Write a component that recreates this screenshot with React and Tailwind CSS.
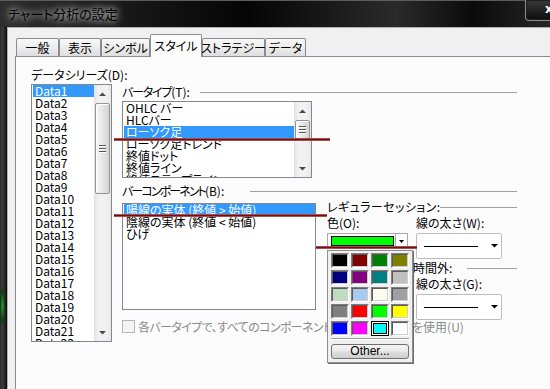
import React from "react";

const FONT = "font-['Noto_Sans_CJK_JP','Noto_Sans',sans-serif] [font-feature-settings:'palt']";

function UpArrow() {
  return (
    <svg width="7" height="4" viewBox="0 0 7 4">
      <path d="M0 4L3.5 0.5L7 4Z" fill="#4a4a4a" />
    </svg>
  );
}

function DownArrow({ color = "#4a4a4a" }) {
  return (
    <svg width="7" height="4" viewBox="0 0 7 4">
      <path d="M0 0L7 0L3.5 3.5Z" fill={color} />
    </svg>
  );
}

function Thumb({ cls }) {
  return (
    <div
      className={`mx-px rounded-[2px] border border-[#959595] bg-[linear-gradient(90deg,#f7f7f7,#e6e6e6_50%,#d4d4d4)] shadow-[inset_1px_1px_0_#ffffff] flex flex-col items-center justify-center gap-[2px] ${cls}`}
    >
      <div className="w-[7px] h-px bg-[#555555] shadow-[0_1px_0_#ffffff]" />
      <div className="w-[7px] h-px bg-[#555555] shadow-[0_1px_0_#ffffff]" />
      <div className="w-[7px] h-px bg-[#555555] shadow-[0_1px_0_#ffffff]" />
    </div>
  );
}

function VScroll({ thumbCls }) {
  return (
    <div className="w-[17px] shrink-0 flex flex-col bg-[linear-gradient(90deg,#e2e2e2,#f1f1f1_25%,#f1f1f1_75%,#e8e8e8)]">
      <div className="h-[17px] shrink-0 flex items-center justify-center">
        <UpArrow />
      </div>
      <div className="flex-1 flex flex-col">
        <Thumb cls={thumbCls} />
      </div>
      <div className="h-[17px] shrink-0 flex items-center justify-center">
        <DownArrow />
      </div>
    </div>
  );
}

function Item({ label, selected }) {
  return (
    <div
      className={`h-[12px] leading-[12px] pl-[2px] whitespace-nowrap ${
        selected ? "bg-[#3399ff] text-white" : "text-black"
      }`}
    >
      {label}
    </div>
  );
}

function Header({ label, suffix, lineW, className = "", textCls = "" }) {
  return (
    <div className={`flex items-center justify-between h-[14px] ${className}`}>
      <span className="whitespace-nowrap leading-[14px]">
        <span className={textCls}>{label}</span>
        {suffix}
      </span>
      <div className={`h-px bg-[#a0a0a0] ${lineW}`} />
    </div>
  );
}

function LineCombo() {
  return (
    <div className="w-[86px] h-[26px] rounded-[2px] border border-[#bdbdbd] bg-white flex items-center">
      <div className="ml-[7px] w-[54px] h-px bg-black" />
      <div className="ml-[13px]">
        <DownArrow color="#000000" />
      </div>
    </div>
  );
}

function ColorCombo() {
  return (
    <div className="w-[81px] h-[16px] border border-[#a8a8a8] bg-white flex items-stretch">
      <div className="ml-[3px] my-[2px] w-[63px] border border-black bg-[#00ff00]" />
      <div className="ml-auto w-[12px] border-l border-[#a8a8a8] flex items-center justify-center">
        <svg width="5" height="3" viewBox="0 0 5 3">
          <path d="M0 0L5 0L2.5 3Z" fill="#000000" />
        </svg>
      </div>
    </div>
  );
}

const SWATCHES = [
  "#000000", "#800000", "#008000", "#808000",
  "#000080", "#800080", "#008080", "#c0c0c0",
  "#c0dcc0", "#a6caf0", "#fffbf0", "#a0a0a4",
  "#808080", "#ff0000", "#00ff00", "#ffff00",
  "#0000ff", "#ff00ff", "#00ffff", "#ffffff",
];

function Swatch({ color, selected }) {
  if (selected) {
    return (
      <div className="h-[15px] border border-black bg-white p-px">
        <div className="h-full border border-black" style={{ backgroundColor: color }} />
      </div>
    );
  }
  return (
    <div className="h-[15px] border border-t-[#7f7f7f] border-l-[#7f7f7f] border-b-[#ffffff] border-r-[#ffffff]">
      <div
        className="h-full border border-t-[#5a5a5a] border-l-[#5a5a5a] border-b-[#cfcfcf] border-r-[#cfcfcf]"
        style={{ backgroundColor: color }}
      />
    </div>
  );
}

export default function App() {
  const data = Array.from({ length: 22 }, (_, i) => `Data${i + 1}`);
  const barTypes = ["OHLC バー", "HLCバー", "ローソク足", "ローソク足トレンド", "終値ドット", "終値ライン", "終値ステップライン"];
  const comps = ["陽線の実体 (終値 > 始値)", "陰線の実体 (終値 < 始値)", "ひげ"];

  return (
    <div className={`relative w-[550px] h-[389px] overflow-hidden bg-black text-[12px] text-black ${FONT}`}>
      {/* Title bar */}
      <div className="h-[27px] flex items-start justify-between border-t border-[#5c5c5c] bg-[linear-gradient(90deg,#2e2e2e_0%,#161616_25%,#050505_45%,#1c1c1c_62%,#2a2a2a_72%,#0a0a0a_86%,#262626_100%)]">
        <div className="pl-[8px] pt-[4px] text-[13px] leading-[17px] text-black [text-shadow:0_0_6px_rgba(255,255,255,0.95),0_0_12px_rgba(255,255,255,0.6)]">
          チャート分析の設定
        </div>
        <div className="-mr-[18px] -mt-px w-[43px] h-[21px] border border-t-0 border-[#8c8c8c] rounded-b-[4px] bg-[linear-gradient(#3a3a3a,#0c0c0c)] shadow-[inset_0_0_0_1px_#1e1e1e] text-white font-bold text-[12px] leading-[19px] pl-[19px] font-['DejaVu_Sans',sans-serif]">
          x
        </div>
      </div>

      <div className="flex h-[362px]">
        {/* left frame */}
        <div className="w-[7px] flex flex-col bg-[linear-gradient(90deg,#2a2a2a,#3c3c3c_40%,#0b0b0b)]">
          <div className="h-[262px]" />
          <div className="h-[34px] w-[5px] bg-[radial-gradient(ellipse_at_center,#2f9a3a,#143f18_60%,transparent)]" />
        </div>

        {/* client */}
        <div className="flex-1 flex flex-col bg-[#f0f0f0] border-l border-t border-[#b0b0b0] pt-[6px]">
          {/* tabs */}
          <div className="ml-[8px] h-[22px] flex items-end">
            {[
              ["一般", "w-[43px]"],
              ["表示", "w-[42px]"],
              ["シンボル", "w-[49px]"],
              ["スタイル", "w-[52px]", true],
              ["ストラテジー", "w-[63px]"],
              ["データ", "w-[41px]"],
            ].map(([label, w, sel]) =>
              sel ? (
                <div
                  key={label}
                  className={`relative z-10 -mb-px h-[23px] ${w} border border-b-0 border-[#898c95] rounded-t-[2px] bg-[#fcfcfc] flex items-center justify-center leading-[14px] whitespace-nowrap`}
                >
                  {label}
                </div>
              ) : (
                <div
                  key={label}
                  className={`h-[18px] ${w} border border-b-0 border-[#898c95] rounded-t-[2px] bg-[linear-gradient(#f8f8f8,#ececec_50%,#dedede)] flex items-center justify-center leading-[14px] whitespace-nowrap`}
                >
                  {label}
                </div>
              )
            )}
          </div>

          {/* panel */}
          <div className="ml-[7px] flex-1 border-t border-l border-[#898c95] bg-[#fcfcfc] flex items-start pl-[15px] pt-[11px]">
            {/* col 1 */}
            <div className="w-[81px] shrink-0 flex flex-col">
              <div className="h-[14px] leading-[14px] whitespace-nowrap">データシリーズ(D):</div>
              <div className="mt-[2px] h-[258px] border border-[#828790] bg-white flex">
                <div className="flex-1 overflow-hidden pl-px">
                  {data.map((d, i) => (
                    <Item key={d} label={d} selected={i === 0} />
                  ))}
                </div>
                <VScroll thumbCls="mt-px h-[91px]" />
              </div>
            </div>

            {/* col 2 + 3 */}
            <div className="ml-[10px] mt-[17px] w-[395px] shrink-0 flex flex-col">
              <Header label="バータイプ" suffix="(T):" lineW="w-[317px]" textCls="tracking-[-1.2px]" />
              <div className="mt-[2px] w-[190px] h-[77px] border border-[#828790] bg-white flex">
                <div className="flex-1 overflow-hidden pl-px">
                  {barTypes.map((b, i) => (
                    <Item key={b} label={b} selected={i === 2} />
                  ))}
                </div>
                <VScroll thumbCls="mt-px h-[19px]" />
              </div>

              <Header
                className="mt-[6px]"
                label="バーコンポーネント"
                suffix="(B):"
                lineW="w-[267px]"
                textCls="tracking-[-1.9px]"
              />

              <div className="mt-[5px] flex items-start">
                <div className="w-[194px] h-[107px] shrink-0 border border-[#828790] bg-white pl-px">
                  {comps.map((c, i) => (
                    <Item key={c} label={c} selected={i === 0} />
                  ))}
                </div>

                <div className="ml-[11px] -mt-[3px] w-[190px] shrink-0 flex flex-col">
                  <Header label="レギュラーセッション" suffix=":" lineW="w-[88px]" textCls="tracking-[0.4px]" />
                  <div className="mt-[2px] flex h-[14px] leading-[14px]">
                    <div className="w-[89px] whitespace-nowrap">色(O):</div>
                    <div className="whitespace-nowrap">線の太さ(W):</div>
                  </div>
                  <div className="mt-[3px] flex items-start">
                    <ColorCombo />
                    <div className="ml-[8px]">
                      <LineCombo />
                    </div>
                  </div>
                  <div className="mt-[2px] flex items-center h-[14px]">
                    <div className="w-[86px] shrink-0 overflow-hidden whitespace-nowrap leading-[14px] tracking-[0.4px]">
                      レギュラーセッション
                    </div>
                    <span className="whitespace-nowrap leading-[14px]">時間外:</span>
                    <div className="ml-auto h-px w-[50px] bg-[#a0a0a0]" />
                  </div>
                  <div className="mt-[2px] flex h-[14px] leading-[14px]">
                    <div className="w-[89px] whitespace-nowrap">色(C):</div>
                    <div className="whitespace-nowrap">線の太さ(G):</div>
                  </div>
                  <div className="mt-[3px] flex items-start">
                    <div className="w-[89px]" />
                    <LineCombo />
                  </div>
                </div>
              </div>

              {/* checkbox row */}
              <div className="flex items-center h-[13px] text-[#8a8a8a] whitespace-nowrap">
                <div className="w-[13px] h-[13px] shrink-0 border border-[#b5b5b5] bg-[#f4f4f4]" />
                <div className="ml-[3px] w-[274px] shrink-0 overflow-hidden leading-[13px] tracking-[-0.6px]">
                  各バータイプで、すべてのコンポーネントに同じ色とスタイル
                </div>
                <span className="leading-[13px]">を使用(U)</span>
              </div>
            </div>
          </div>
        </div>
      </div>

      {/* color picker popup */}
      <div className="absolute left-[327px] top-[250px] w-[86px] h-[113px] bg-[#f0f0f0] border border-[#8e8e8e] shadow-[1px_1px_0_#6e6e6e] flex flex-col px-[3px] pt-[2px]">
        <div className="grid grid-cols-4 gap-x-[2px] gap-y-[2px]">
          {SWATCHES.map((c, i) => (
            <Swatch key={i} color={c} selected={i === 18} />
          ))}
        </div>
        <div className="mt-[2px] h-[2px] border-t border-[#a0a0a0] border-b border-b-[#ffffff]" />
        <div className="mt-[4px] h-[15px] rounded-[3px] border border-[#707070] bg-[linear-gradient(#f4f4f4,#ebebeb_45%,#dddddd_55%,#cfcfcf)] flex items-center justify-center leading-[13px] font-['Liberation_Sans',sans-serif]">
          Other...
        </div>
      </div>

      {/* red annotation lines */}
      <div className="absolute left-[114px] top-[138px] w-[216px] h-[3px] bg-[linear-gradient(#c48c8c,#7a0c0c_35%,#7a0c0c_65%,#c48c8c)]" />
      <div className="absolute left-[114px] top-[214px] w-[213px] h-[3px] bg-[linear-gradient(#c48c8c,#7a0c0c_35%,#7a0c0c_65%,#c48c8c)]" />
      <div className="absolute left-[316px] top-[246px] w-[101px] h-[3px] bg-[linear-gradient(#c48c8c,#7a0c0c_35%,#7a0c0c_65%,#c48c8c)]" />
    </div>
  );
}
